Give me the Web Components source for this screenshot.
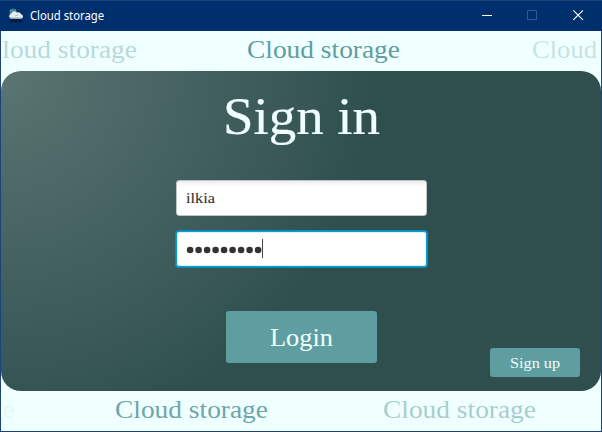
<!DOCTYPE html>
<html lang="en"><head><meta charset="utf-8"><title>Cloud storage</title>
<style>html,body{margin:0;height:100%;overflow:hidden}</style></head><body>
<cloud-window></cloud-window>
<script>
const define = (name, html, setup) => customElements.define(name, class extends HTMLElement {
  connectedCallback() {
    if (this.shadowRoot) return;
    const root = this.attachShadow({mode: 'open'});
    const t = document.createElement('template');
    t.innerHTML = html;
    root.append(t.content.cloneNode(true));
    if (setup) setup(this, root);
  }
});

// One line of text drawn at a given font size and stretched to a given width.
define('fitted-text', `<style>:host{display:block;flex:none}svg{display:block;overflow:visible}
text{font-family:"Liberation Serif",serif;fill:currentColor;stroke:currentColor}</style>
<svg><text x="0"></text></svg>`, (host, root) => {
  const w = host.getAttribute('width'), s = +host.getAttribute('size');
  const h = Math.round(s * 1.2);
  const svg = root.querySelector('svg'), text = root.querySelector('text');
  svg.setAttribute('width', w); svg.setAttribute('height', h);
  text.setAttribute('y', Math.round(s * .86));
  text.setAttribute('font-size', s);
  text.setAttribute('stroke-width', host.getAttribute('weight') || 0);
  text.setAttribute('textLength', w);
  text.setAttribute('lengthAdjust', 'spacingAndGlyphs');
  text.textContent = host.getAttribute('label');
});

define('title-bar', `<style>
:host{display:flex;align-items:center;height:30px;flex:none;background:#002f6e;color:#fff;padding-left:8px;border-top:1px solid #1b4178;box-sizing:content-box}
svg{display:block;flex:none}.t{margin-left:5px;overflow:visible}.c{margin-left:auto}
</style>
<svg width="16" height="16" viewBox="0 0 16 16"><circle cx="5" cy="4" r="3.600" fill="#123f5e"/><path d="M1.500 3h7M1.500 5.500h7M5 .5v7M3 1v6M7 1v6" stroke="#6fc6cf" stroke-width=".8"/><path d="M3.500 10.500a2.300 2.300 0 0 1-.3-4.600A3.500 3.500 0 0 1 9 4.500a3 3 0 0 1 4 1.800 2.200 2.200 0 0 1 .6 4.200z" fill="#e8edf0"/><path d="M2 10h12M7 8l3-1" stroke="#a9bac7"/><path d="M4 11v3M6.500 11v3M9 11v3M11.500 11v3M2 13.500h2.500M6 13.500h3M11 13.500h3" stroke="#0b1420" stroke-width="1.400"/></svg>
<svg class="t" width="78" height="20"><text x="1" y="14" textLength="74" lengthAdjust="spacingAndGlyphs" font-family="Noto Sans" font-size="12" fill="#fff">Cloud storage</text></svg>
<svg class="c" width="122" height="30"><path d="M2 14.500h10" stroke="#fff"/><path d="M47.500 9.500h9v9h-9z" fill="none" stroke="#315a8e"/><path d="M93.300 9.300l9.600 9.600m0-9.600l-9.600 9.600" stroke="#fff" stroke-width="1.200"/></svg>`);

define('ticker-strip', `<style>:host{display:flex;height:40px;flex:none;overflow:hidden;background:#f0ffff;color:#5f9ea0;align-items:flex-start;padding-top:5px;box-sizing:border-box}</style><slot></slot>`);

define('text-field', `<style>
:host{display:flex;align-items:center;box-sizing:border-box;width:251px;height:36px;padding-left:9px;border:1px solid #bcc4c4;border-radius:3px;background:linear-gradient(#eee,#fff 6px);color:#333}
:host([focused]){border:1px solid #039ed3;background:#fff;box-shadow:0 0 0 1px #1687ac,inset 0 0 0 1px #d5f3fb}
</style><slot></slot>`);

define('password-dots', `<style>:host{display:block}svg{display:block}</style><svg width="80" height="20" fill="#333"></svg>`, (host, root) => {
  const svg = root.querySelector('svg');
  const add = (tag, attrs) => {
    const el = document.createElementNS('http://www.w3.org/2000/svg', tag);
    for (const k in attrs) el.setAttribute(k, attrs[k]);
    svg.append(el);
  };
  for (let n = 0; n < 9; n++) add('circle', {cx: 4.1 + n * 8.5, cy: 11, r: 3.3});
  add('rect', {x: 76, y: 0, width: 1, height: 19, fill: '#444'});
});

define('push-button', `<style>:host{display:flex;align-items:center;justify-content:center;border-radius:3px;background:#5f9ea0;color:#f0ffff}</style><slot></slot>`);

define('sign-in-panel', `<style>
:host{display:flex;flex-direction:column;align-items:center;flex:1;border-radius:20px;color:#f0ffff;background:radial-gradient(circle 375px at 0 0,#5a7572,#2f4f4f);box-sizing:border-box;padding-top:18px}
.fields{display:grid;gap:15px;margin-top:29px}
.fields fitted-text{margin-top:2px}
.login{width:151px;height:52px;margin-top:44px}
.login fitted-text{margin-top:4px}
.up{width:90px;height:29px;align-self:flex-end;margin:-15px 21px 0 0}
.up fitted-text{margin-top:3px}
</style>
<fitted-text label="Sign in" width="157" size="52" weight=".2"></fitted-text>
<div class="fields"><text-field><fitted-text label="ilkia" width="29" size="15" weight=".1"></fitted-text></text-field>
<text-field focused><password-dots></password-dots></text-field></div>
<push-button class="login"><fitted-text label="Login" width="63" size="26"></fitted-text></push-button>
<push-button class="up"><fitted-text label="Sign up" width="50" size="14.5"></fitted-text></push-button>`);

define('cloud-window', `<style>
:host{display:flex;flex-direction:column;width:602px;height:432px;background:#f0ffff;border:solid #1f4377;border-width:0 1px 1px;box-sizing:border-box}
title-bar{margin:0 -1px}
</style>
<title-bar></title-bar>
<ticker-strip>
<fitted-text style="margin-left:-17px;opacity:.38" label="Cloud storage" width="153" size="26"></fitted-text>
<fitted-text style="margin-left:110px" label="Cloud storage" width="153" size="26"></fitted-text>
<fitted-text style="margin-left:132px;opacity:.28" label="Cloud" width="65" size="26"></fitted-text>
</ticker-strip>
<sign-in-panel></sign-in-panel>
<ticker-strip>
<fitted-text style="margin-left:-139px;opacity:.08" label="Cloud storage" width="153" size="26"></fitted-text>
<fitted-text style="margin-left:100px;opacity:.9" label="Cloud storage" width="153" size="26"></fitted-text>
<fitted-text style="margin-left:115px;opacity:.5" label="Cloud storage" width="153" size="26"></fitted-text>
</ticker-strip>`);
</script></body></html>
